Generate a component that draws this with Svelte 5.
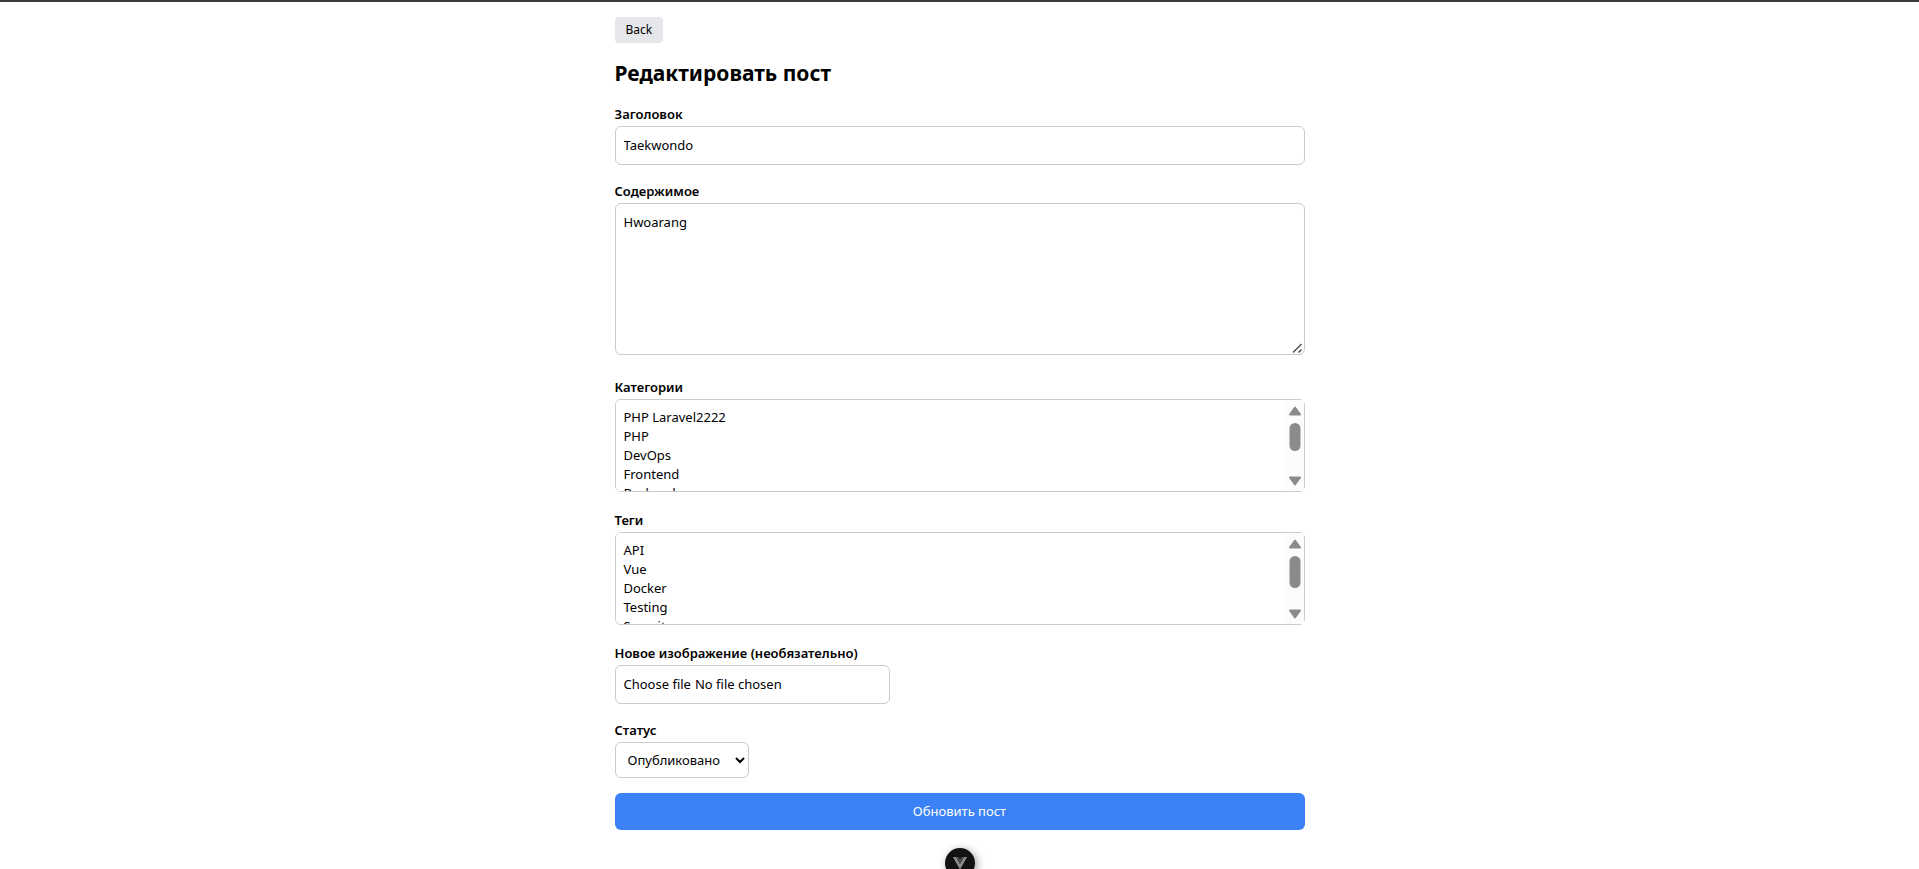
<script>
  let title = $state('Taekwondo');
  let content = $state('Hwoarang');
  let status = $state('published');
  let selectedCategories = $state([]);
  let selectedTags = $state([]);
  let fileName = $state('No file chosen');

  const categories = ['PHP Laravel2222', 'PHP', 'DevOps', 'Frontend', 'Backend', 'Mobile', 'Design', 'Database', 'Cloud'];
  const tags = ['API', 'Vue', 'Docker', 'Testing', 'Security', 'Laravel', 'Linux', 'Redis'];

  function pickFile(event) {
    fileName = event.currentTarget.files[0]?.name ?? 'No file chosen';
  }
</script>

{#snippet scrollbar(thumb)}
  <svg class="scrollbar" viewBox="0 0 19 91" width="19" height="91" aria-hidden="true">
    <rect width="19" height="91" fill="#fcfcfc" />
    <path d="M10 7.5 L15 14.5 H5 Z" fill="#8b8b8b" stroke="#8b8b8b" stroke-width="2" stroke-linejoin="round" />
    <rect x="4.5" y="23" width="11" height={thumb} rx="5.5" fill="#8b8b8b" />
    <path d="M10 84.5 L15 77.5 H5 Z" fill="#8b8b8b" stroke="#8b8b8b" stroke-width="2" stroke-linejoin="round" />
  </svg>
{/snippet}

<main>
  <button class="back" type="button">Back</button>
  <h1>Редактировать пост</h1>

  <form onsubmit={(e) => e.preventDefault()}>
    <div class="field">
      <label for="title">Заголовок</label>
      <input class="control wide" id="title" type="text" bind:value={title} />
    </div>

    <div class="field area">
      <label for="content">Содержимое</label>
      <textarea class="control wide" id="content" bind:value={content}></textarea>
    </div>

    <div class="field list">
      <label for="categories">Категории</label>
      <div class="listbox">
        <select class="control wide" id="categories" multiple bind:value={selectedCategories}>
          {#each categories as name}<option value={name}>{name}</option>{/each}
        </select>
        {@render scrollbar(28)}
      </div>
    </div>

    <div class="field list">
      <label for="tags">Теги</label>
      <div class="listbox">
        <select class="control wide" id="tags" multiple bind:value={selectedTags}>
          {#each tags as name}<option value={name}>{name}</option>{/each}
        </select>
        {@render scrollbar(32)}
      </div>
    </div>

    <div class="field">
      <label for="image">Новое изображение (необязательно)</label>
      <div class="control file">
        <span>Choose file</span>
        <span>{fileName}</span>
        <input id="image" type="file" onchange={pickFile} />
      </div>
    </div>

    <div class="field last">
      <label for="status">Статус</label>
      <select class="control status" id="status" bind:value={status}>
        <option value="published">Опубликовано</option>
        <option value="draft">Черновик</option>
      </select>
    </div>

    <button class="submit" type="submit">Обновить пост</button>
  </form>
</main>

<button class="devtools" type="button" aria-label="Vue DevTools">
  <svg viewBox="0 0 14 13" width="14" height="13" aria-hidden="true">
    <path d="M0 0 H3 L7 7 L11 0 H14 L7 12.5 Z" fill="#8f8f8f" />
    <path d="M3 0 H5.5 L7 2.7 L8.5 0 H11 L7 7 Z" fill="#4c4c4c" />
  </svg>
</button>

<style>
  :global(body) {
    background: #fff;
    border-top: 2px solid #3a3839;
    color: #000;
    font: 13px/20px "Noto Sans", "Segoe UI", sans-serif;
  }

  main {
    box-sizing: border-box;
    max-width: 722px;
    margin: 0 auto;
    padding: 15px 16px;
  }

  button,
  .control {
    font: inherit;
    color: inherit;
  }

  .back {
    display: block;
    padding: 3px 11px;
    border: 0;
    border-radius: 4px;
    background: #e5e7eb;
    font-size: 12px;
  }

  h1 {
    margin: 15px 0 16px;
    font-size: 21px;
    line-height: 30px;
    font-weight: 700;
  }

  form {
    display: flex;
    flex-direction: column;
  }

  .field {
    display: flex;
    flex-direction: column;
    align-items: flex-start;
    gap: 2px;
    margin-bottom: 16px;
  }

  .area {
    margin-bottom: 22px;
  }

  .list {
    margin-bottom: 18px;
  }

  .last {
    margin-bottom: 15px;
  }

  label {
    font-weight: 600;
  }

  .control {
    box-sizing: border-box;
    margin: 0;
    padding: 8px;
    border: 1px solid #ccc;
    border-radius: 6px;
    background: #fff;
    line-height: 21px;
  }

  .wide {
    width: 100%;
  }

  textarea {
    display: block;
    height: 152px;
    resize: vertical;
  }

  textarea::-webkit-resizer {
    background: url("data:image/svg+xml,%3Csvg xmlns='http://www.w3.org/2000/svg' width='15' height='15'%3E%3Cpath d='M4 13.5 L12.5 5 M9.5 13.5 L12.5 10.5' stroke='%23505050' stroke-width='1.5'/%3E%3C/svg%3E") no-repeat right bottom;
  }

  .listbox {
    position: relative;
    width: 100%;
  }

  .listbox select {
    display: block;
    height: 93px;
    scrollbar-width: none;
  }

  .listbox option {
    min-height: 19px;
    padding: 0;
    line-height: 19px;
  }

  .scrollbar {
    position: absolute;
    top: 1px;
    right: 1px;
    pointer-events: none;
  }

  .file {
    position: relative;
    display: flex;
    gap: 4px;
    width: 275px;
  }

  .file input {
    position: absolute;
    inset: 0;
    width: 100%;
    opacity: 0;
  }

  .status {
    min-width: 134px;
    height: 36px;
    padding: 0 8px;
  }

  .submit {
    padding: 8px;
    border: 0;
    border-radius: 6px;
    background: #3b82f6;
    color: #fff;
    line-height: 21px;
  }

  .devtools {
    position: fixed;
    bottom: -9px;
    left: 50%;
    display: flex;
    align-items: center;
    justify-content: center;
    width: 30px;
    height: 30px;
    padding: 0;
    border: 0;
    border-radius: 50%;
    background: #121212;
    box-shadow: 2px 2px 8px rgba(0, 0, 0, 0.4);
    transform: translateX(-50%);
  }
</style>
